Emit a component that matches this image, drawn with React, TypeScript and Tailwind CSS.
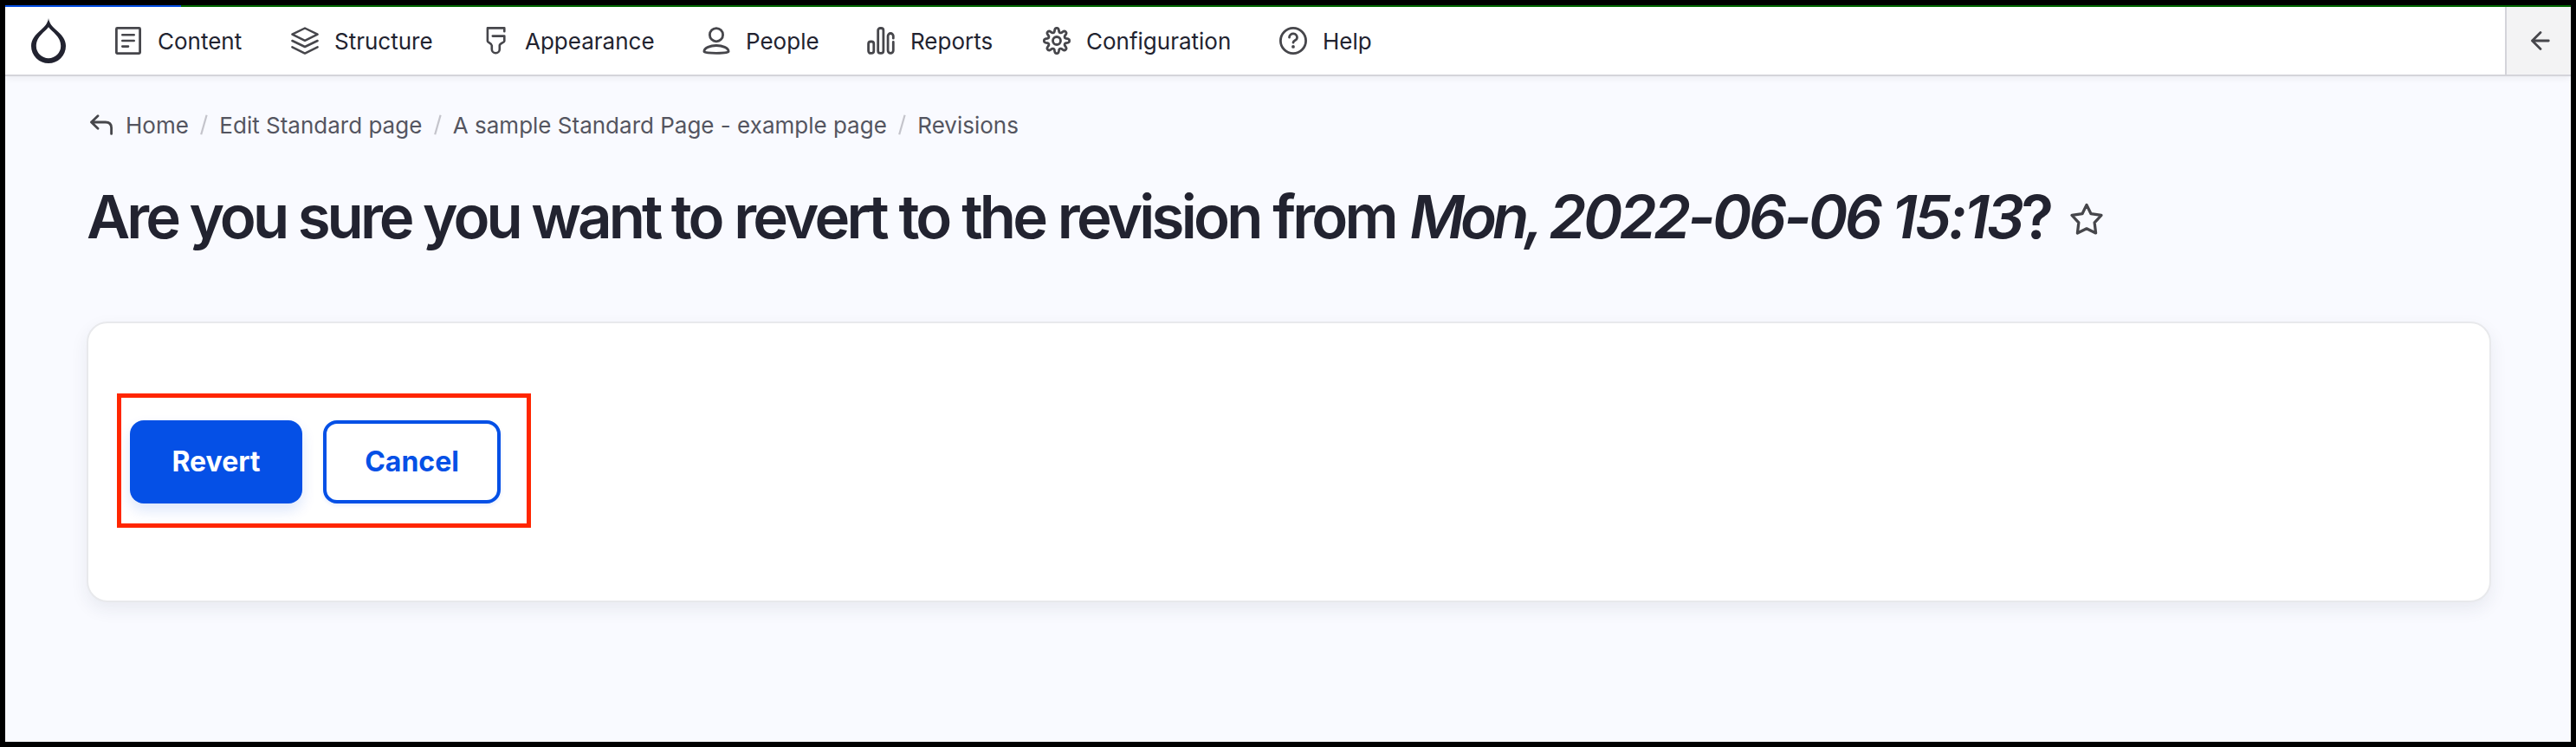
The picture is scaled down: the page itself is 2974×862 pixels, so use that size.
import React from "react";

const gearPath = (() => {
  const pts: string[] = [];
  for (let i = 0; i < 160; i++) {
    const a = (i / 160) * Math.PI * 2;
    const r = 12.3 + (2.3 * Math.tanh(1.6 * Math.cos(8 * a))) / Math.tanh(1.6);
    pts.push(`${(16 + r * Math.sin(a)).toFixed(2)} ${(16 - r * Math.cos(a)).toFixed(2)}`);
  }
  return `M${pts.join("L")}Z`;
})();

function Icon({ children }: { children: React.ReactNode }) {
  return (
    <svg
      className="size-8 shrink-0 overflow-visible"
      viewBox="0 0 32 32"
      fill="none"
      stroke="#46464b"
      strokeWidth="2.8"
      strokeLinecap="round"
      strokeLinejoin="round"
    >
      {children}
    </svg>
  );
}

const items: { label: string; width: string; icon: React.ReactNode }[] = [
  {
    label: "Content",
    width: "w-[204px]",
    icon: (
      <>
        <rect x="2.4" y="1.4" width="27.2" height="29.2" rx="1" />
        <path d="M9.3 9.2h13.4M9.3 16h13.4M9.3 22.6h6.7" strokeWidth="2.6" />
      </>
    ),
  },
  {
    label: "Structure",
    width: "w-[220px]",
    icon: (
      <path
        d="M1.4 8.6 16 1.5l14.6 7.1L16 15.8zM1.4 16 16 23l14.6-7M1.4 23.4 16 30.6l14.6-7.2"
        strokeWidth="2.5"
      />
    ),
  },
  {
    label: "Appearance",
    width: "w-[255px]",
    icon: (
      <path
        d="M26.3 5.2V1.4H6.9v15.200c0 1.400 4.900 2.600 4.900 4.800v4.300a4.500 4.500 0 0 0 9 0v-4.300c0-2.200 5.500-3.400 5.500-4.800v-6H12.800"
        strokeWidth="2.6"
      />
    ),
  },
  {
    label: "People",
    width: "w-[190px]",
    icon: (
      <>
        <circle cx="16" cy="9.2" r="7.6" />
        <path d="M1.900 28.500c0-4.400 7.200-7 14.100-7s14.100 2.600 14.100 7c0 2.400-28.200 2.400-28.200 0z" />
      </>
    ),
  },
  {
    label: "Reports",
    width: "w-[203px]",
    icon: (
      <>
        <rect x="1.6" y="17" width="6.2" height="13.4" rx="2.6" />
        <rect x="12.7" y="1.5" width="6.2" height="28.9" rx="2.6" />
        <path d="M30.300 13.200v-2.600a3.100 3.100 0 0 0-6.200 0v16.700a3.100 3.100 0 0 0 6.200 0v-9.800" />
      </>
    ),
  },
  {
    label: "Configuration",
    width: "w-[273px]",
    icon: (
      <>
        <path d={gearPath} />
        <circle cx="16" cy="16" r="4.5" />
      </>
    ),
  },
  {
    label: "Help",
    width: "w-[160px]",
    icon: (
      <>
        <circle cx="16" cy="16" r="14.6" />
        <path d="M11.500 12.100a4.500 4.500 0 0 1 9 .6c0 2.900-4.300 2.600-4.500 5.500" />
        <circle cx="16" cy="22.9" r="1.9" fill="#46464b" stroke="none" />
      </>
    ),
  },
];

function Toolbar() {
  return (
    <header className="relative flex h-[80px] shrink-0 border-b-2 border-[#d4d4da] bg-white shadow-[0_2px_8px_rgba(0,0,0,0.06)]">
      <div className="flex w-[126px] items-center pl-[30px]">
        <svg className="h-[52px] w-[40px]" viewBox="0 0 40 52" fill="#222330" fillRule="evenodd">
          <path d="M20 0c.8 6 4.600 9.800 9 13.700C35 19 40 24.300 40 32a20 20 0 0 1-40 0c0-7.700 5-13 11-18.300C15.400 9.800 19.200 6 20 0zM20 10.300c-2.300 3-5.400 5.400-8.400 8.600C8.600 22 5.800 26.200 5.800 32a14.200 14.200 0 0 0 28.400 0c0-5.800-2.800-10-5.800-13.100-3-3.200-6.100-5.600-8.400-8.600z" />
        </svg>
      </div>
      <nav className="flex flex-1 items-center">
        {items.map((it) => (
          <a key={it.label} className={`flex items-center gap-[18px] ${it.width}`}>
            <Icon>{it.icon}</Icon>
            <span className="pt-[2px] text-[26px] leading-8 text-[#222330]">{it.label}</span>
          </a>
        ))}
      </nav>
      <button className="flex w-[76px] items-center border-l-2 border-[#d4d4da] bg-[#f3f3f4] pl-7">
        <svg className="h-[22px] w-[22px]" viewBox="0 0 22 22" fill="none" stroke="#46464b" strokeWidth="2.8" strokeLinecap="round" strokeLinejoin="round">
          <path d="M11 1.500 1.500 11l9.500 9.500M1.500 11h18.800" />
        </svg>
      </button>
    </header>
  );
}

function Slash() {
  return (
    <svg className="mx-[13.25px] h-[24px] w-[9px]" viewBox="0 0 9 24" stroke="#c4c4cb" strokeWidth="2.2">
      <path d="M7.600 .8 1.200 23.200" />
    </svg>
  );
}

export default function App() {
  return (
    <div className="flex h-[862px] w-[2974px] flex-col border-[6px] border-black bg-[#f9faff] font-['Inter',sans-serif]">
      <div className="flex h-[2px] shrink-0 bg-[#006a00]">
        <div className="w-[203px] bg-[#0550e6]" />
      </div>
      <Toolbar />
      <main className="flex flex-col pl-[94px] pr-[92px] pt-[36px]">
        <div className="flex h-10 items-center whitespace-nowrap text-[26px] leading-10 text-[#545560]">
          <svg className="ml-1 mr-[15px] h-6 w-[26px]" viewBox="0 0 26 24" fill="none" stroke="#46464b" strokeWidth="2.8" strokeLinecap="round" strokeLinejoin="round">
            <path d="M9 1.700 1.500 9 9 16.300M1.500 9h16.200c4.400 0 6.900 2.400 6.900 6.600v6.800" />
          </svg>
          <span className="pt-[2px]">Home</span>
          <Slash />
          <span className="pt-[2px]">Edit Standard page</span>
          <Slash />
          <span className="pt-[2px]">A sample Standard Page - example page</span>
          <Slash />
          <span className="pt-[2px]">Revisions</span>
        </div>
        <div className="mt-11 flex h-[84px] items-center">
          <h1 className="whitespace-nowrap text-[69px] font-semibold leading-[84px] tracking-[-3.8px] text-[#222330]">
            <span className="tracking-[-3.95px]">Are you sure you want to</span>
            <span className="[word-spacing:1px]"> revert to the revision from </span>
            <em className="ml-[2px] tracking-[-3.6px]">
              <span className="tracking-[-5px]">Mon, </span>2022-06-06 15:13
            </em>
            ?
          </h1>
          <svg className="ml-[23px] mt-1 h-[37px] w-[38px]" viewBox="0 0 37 36" fill="none" stroke="#46464b" strokeWidth="3.2" strokeLinejoin="round">
            <path d="M18.500 2.300 23.400 12.400 35 14.100 27.400 22.300 28.800 34 18.500 29 8.200 34 9.600 22.300 2 14.100 13.600 12.400z" />
          </svg>
        </div>
        <section className="mt-[79px] flex h-[324px] items-center rounded-3xl border-2 border-[#e8e9ec] bg-white pl-[48px] shadow-[0_8px_20px_rgba(34,50,80,0.08)]">
          <div className="relative flex gap-6">
            <button className="h-24 w-[199px] rounded-2xl bg-[#0550e6] text-[32px] font-bold text-white shadow-[0_8px_16px_rgba(5,80,230,0.14)]">
              Revert
            </button>
            <button className="h-24 w-[205px] rounded-2xl border-4 border-[#0550e6] bg-white text-[32px] font-bold text-[#0550e6] shadow-[0_2px_4px_rgba(5,80,230,0.1)]">
              Cancel
            </button>
            <div className="absolute -left-[15px] -top-[31px] h-[155px] w-[478px] border-[5px] border-[#ff2600]" />
          </div>
        </section>
      </main>
    </div>
  );
}
